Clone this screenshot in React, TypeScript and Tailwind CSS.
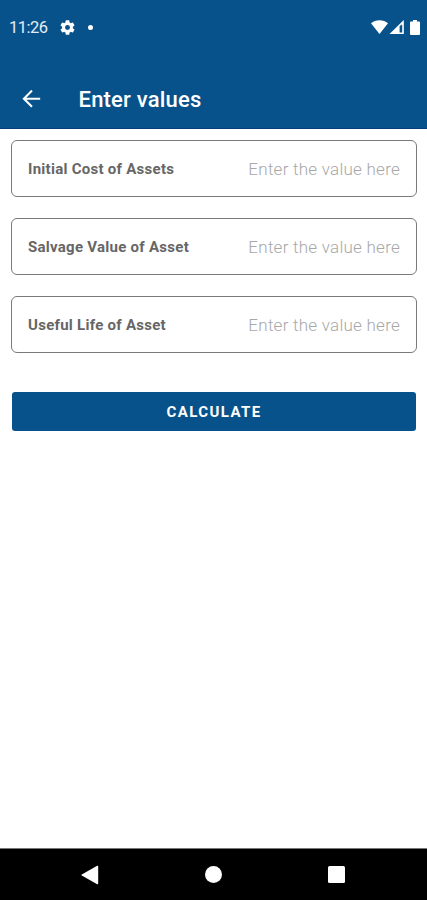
import React from 'react';

type Field = {
  id: string;
  label: string;
};

const FIELDS: Field[] = [
  { id: 'cost', label: 'Initial Cost of Assets' },
  { id: 'salvage', label: 'Salvage Value of Asset' },
  { id: 'life', label: 'Useful Life of Asset' }
];

export default function App() {
  return (
    <div className="flex h-[900px] w-[427px] flex-col overflow-hidden bg-white font-['Roboto',sans-serif]">
      <header className="h-[129px] shrink-0 border-b border-[#063f78] bg-[#08528b] text-white">
        <StatusBar />
        <div className="flex h-[60px] items-center pl-[22px]">
          <svg width="19" height="18" viewBox="0 0 19 18" fill="none" stroke="currentColor" strokeWidth="2.1">
            <path d="M18.2 8.7H2M10 .6L1.9 8.7l8.1 8.1" />
          </svg>
          <h1 className="ml-[37.5px] pt-0.5 text-[22px] leading-none font-medium tracking-[0.2px]">Enter values</h1>
        </div>
      </header>

      <main className="flex-1 pt-[10.5px] pr-[10px] pl-[11px]">
        <div className="flex flex-col gap-[21px]">
          {FIELDS.map(field => (
            <FieldRow key={field.id} field={field} />
          ))}
        </div>
        <div className="px-px pt-[39px]">
          <button className="block h-[39px] w-full rounded-[3px] bg-[#08528b] pt-0.5 text-[15px] font-bold tracking-[1.4px] text-white">
            CALCULATE
          </button>
        </div>
      </main>

      <NavBar />
    </div>
  );
}

function StatusBar() {
  return (
    <div className="flex h-[69px] items-start justify-between pt-[18px] pr-[6px] pl-[9px]">
      <div className="flex h-[18px] items-center">
        <span className="w-[39px] pt-0.5 text-[16.5px] leading-none tracking-[-0.5px] text-[#e4edf5]">11:26</span>
        <svg className="ml-3" width="15" height="15" viewBox="2 2 20 20" fill="currentColor">
          <path d="M19.14 12.94c.04-.3.06-.61.06-.94s-.02-.64-.07-.94l2.03-1.58a.49.49 0 0 0 .12-.61l-1.92-3.32a.49.49 0 0 0-.59-.22l-2.39.96a7 7 0 0 0-1.62-.94l-.36-2.54a.48.48 0 0 0-.48-.41h-3.84a.48.48 0 0 0-.47.41l-.36 2.54c-.59.24-1.13.57-1.62.94l-2.39-.96a.48.48 0 0 0-.59.22L2.73 8.87a.48.48 0 0 0 .12.61l2.03 1.58a6 6 0 0 0 0 1.88l-2.03 1.58a.49.49 0 0 0-.12.61l1.92 3.32c.12.22.37.29.59.22l2.39-.96c.5.38 1.03.7 1.62.94l.36 2.54c.05.24.24.41.48.41h3.84c.24 0 .44-.17.47-.41l.36-2.54c.59-.24 1.13-.56 1.62-.94l2.39.96c.22.08.47 0 .59-.22l1.92-3.32a.48.48 0 0 0-.12-.61zM12 15.3a3.3 3.3 0 1 1 0-6.6 3.3 3.3 0 0 1 0 6.6z" />
        </svg>
        <span className="ml-[13px] size-[5px] rounded-full bg-white" />
      </div>

      <div className="flex h-[18px] items-center">
        <svg width="17" height="14" viewBox="0 0 17 14" fill="currentColor">
          <path d="M0 3.3C4.6-.9 12.4-.9 17 3.3L8.5 14z" />
        </svg>
        <svg className="ml-[0.5px]" width="16" height="14" viewBox="0 0 16 14">
          <path d="M14.8 0v14H.5z" fill="#fff" />
          <path d="M10.6 6v6.6h2.6V4.4z" fill="#08528b" />
        </svg>
        <svg className="ml-[5.5px] mr-px" width="10" height="15" viewBox="0 0 10 15" fill="currentColor">
          <path d="M3 0h4v1.5h2a1 1 0 0 1 1 1V14a1 1 0 0 1-1 1H1a1 1 0 0 1-1-1V2.5a1 1 0 0 1 1-1h2z" />
        </svg>
      </div>
    </div>
  );
}

function FieldRow({ field }: { field: Field }) {
  return (
    <label className="flex h-[57px] items-center justify-between rounded-[6px] border border-[#7a7a7a] px-4 pt-0.5">
      <span className="text-[15px] font-bold tracking-[0.27px] text-[#666]">{field.label}</span>
      <input
        className="w-[160px] pt-0.5 text-right text-[17px] font-light tracking-[0.25px] outline-none placeholder:text-[#a8a8a8]"
        placeholder="Enter the value here"
      />
    </label>
  );
}

function NavBar() {
  return (
    <nav className="flex h-[52px] shrink-0 items-center justify-between border-t border-[#777] bg-black pr-[82px] pl-[81px] text-white">
      <svg width="18" height="20" viewBox="0 0 18 20" fill="currentColor">
        <path d="M16.2.8a.7.7 0 0 1 1 .6v17.2a.7.7 0 0 1-1 .6L.8 10.6a.7.7 0 0 1 0-1.2z" />
      </svg>
      <span className="size-[17px] rounded-full bg-white" />
      <span className="size-[17px] rounded-[1.5px] bg-white" />
    </nav>
  );
}
